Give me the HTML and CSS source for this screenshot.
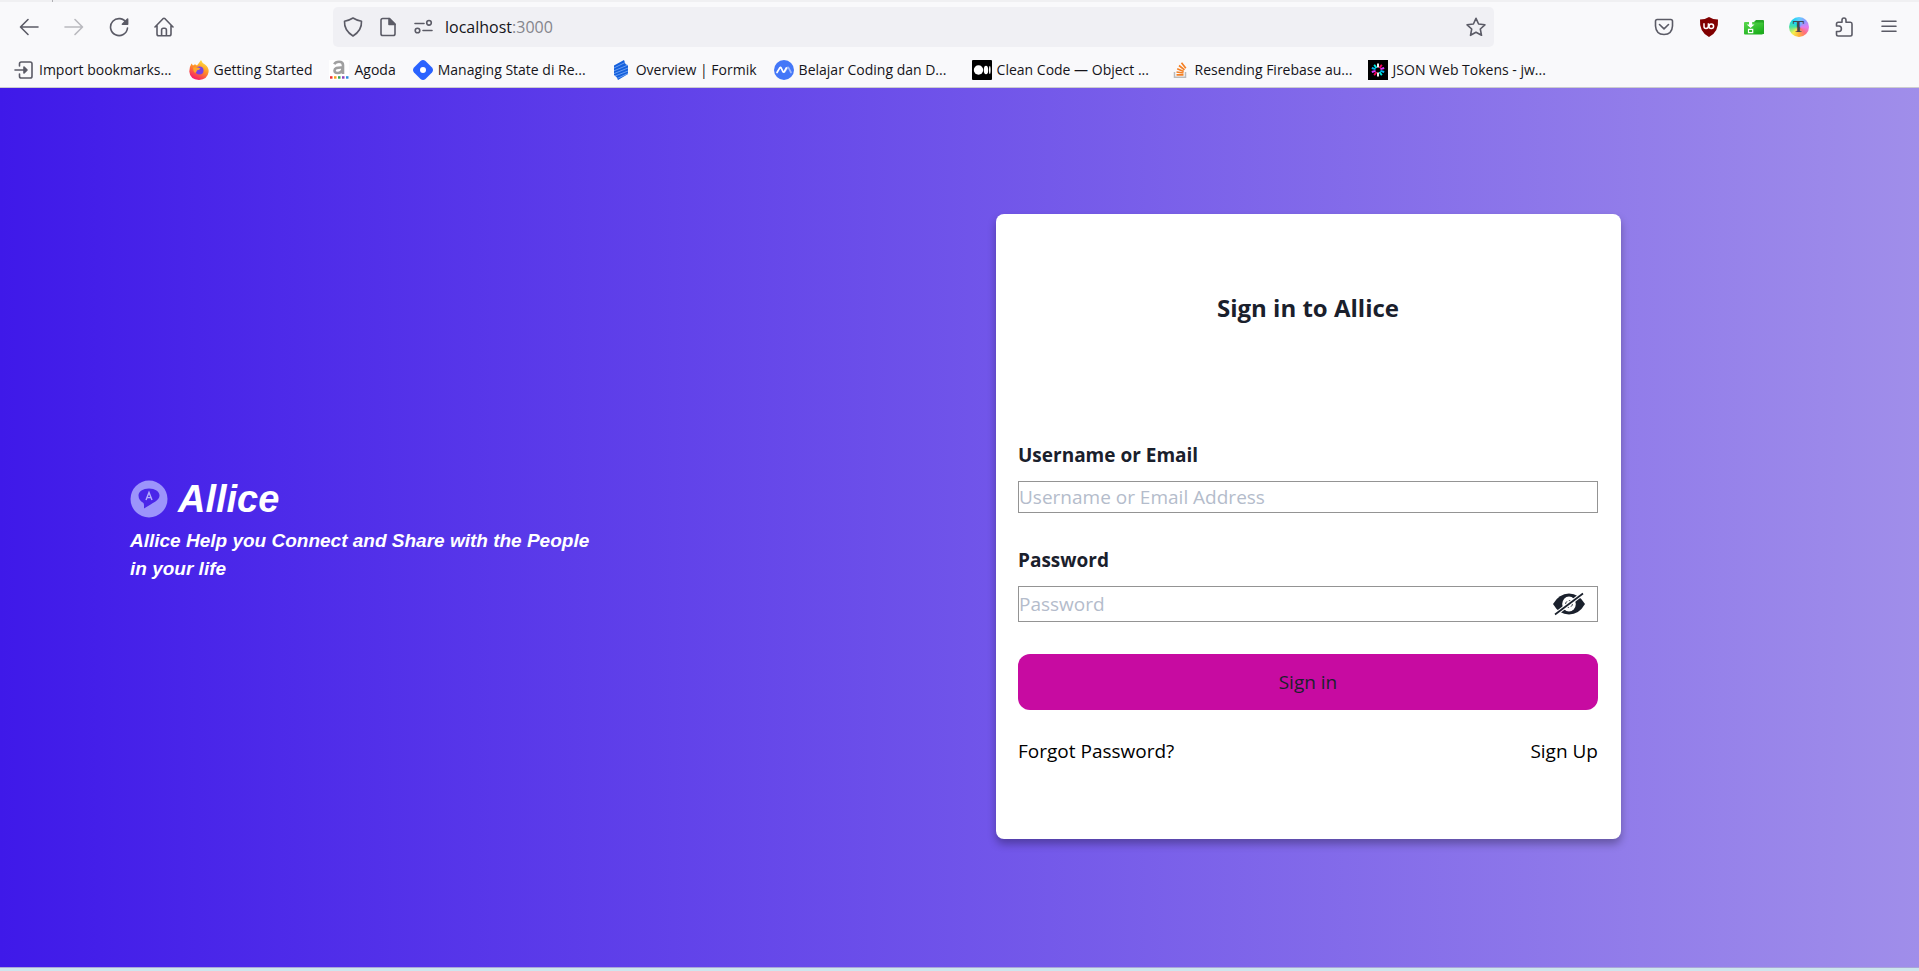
FILE: index.html
```html
<!DOCTYPE html>
<html lang="en">
<head>
<meta charset="utf-8">
<title>Allice</title>
<link rel="stylesheet" href="styles.css">
</head>
<body>
<header class="browser">
  <div class="tabstrip"><span class="tab-divider"></span></div>
  <nav class="toolbar" aria-label="Browser toolbar">
    <button class="tool" aria-label="Back"><svg viewBox="0 0 20 20"><path d="M19 10H2M9 2.500L1.500 10L9 17.500"/></svg></button>
    <button class="tool tool-off" aria-label="Forward"><svg viewBox="0 0 20 20"><path d="M1 10H18M11 2.500L18.500 10L11 17.500"/></svg></button>
    <button class="tool" aria-label="Reload"><svg viewBox="0 0 20 20"><path d="M17.500 6A8.500 8.500 0 1 0 18.500 11"/><path class="solid" d="M18.600 2v5.200h-5.200z"/></svg></button>
    <button class="tool" aria-label="Home"><svg viewBox="0 0 20 20"><path d="M1 10L9 1.700Q10 .9 11 1.700L19 10M3 8.500V17q0 1.800 1.800 1.800H15.200Q17 18.800 17 17V8.500M7.600 18.500V13q0-1.700 1.700-1.700h1.400q1.700 0 1.700 1.700v5.500"/></svg></button>
    <span class="spacer"></span>
    <div class="urlbar">
      <span class="site-icons">
        <svg viewBox="0 0 20 20"><path d="M10 1Q14 3.500 18.500 4.300Q19 13.500 10 19Q1 13.500 1.500 4.300Q6 3.500 10 1z"/></svg>
        <svg viewBox="0 0 20 20"><path d="M4.500 1.500H11.500L17 7V16.700Q17 18.500 15.200 18.500H4.800Q3 18.500 3 16.700V3.300Q3 1.500 4.800 1.500z"/><path class="solid" d="M11 1.500V7.500H17z"/></svg>
        <svg viewBox="0 0 20 20"><path d="M2 6.500H11M10 13.500H19"/><circle cx="16" cy="5.800" r="2.300"/><circle cx="4.500" cy="13.500" r="2.300"/></svg>
      </span>
      <span class="address">localhost<span class="port">:3000</span></span>
      <svg class="star" viewBox="0 0 20 20"><path d="M10 1.300L12.600 7L18.900 7.800L14.300 12L15.500 18.300L10 15.200L4.500 18.300L5.700 12L1.100 7.800L7.400 7z"/></svg>
    </div>
    <span class="spacer"></span>
    <button class="tool" aria-label="Pocket"><svg viewBox="0 0 20 20"><path d="M3.200 2.500H16.800Q18.500 2.500 18.500 4.200V9Q18 17.400 10 17.500Q2 17.400 1.500 9V4.200Q1.500 2.500 3.200 2.500zM5.500 7.500L10 11.800L14.500 7.500"/></svg></button>
    <button class="tool" aria-label="uBlock Origin"><svg class="art" viewBox="0 0 20 20"><path fill="#800000" d="M10 0Q14 2.500 19 2.500Q20 15 10 20Q0 15 1 2.500Q6 2.500 10 0z"/><path fill="none" stroke="#fff" stroke-width="1.500" d="M5 6.300V9.500Q5 11.500 7 11.500Q9.400 11.500 9.400 9V6.300"/><circle cx="12.300" cy="9.200" r="2.300" fill="none" stroke="#fff" stroke-width="1.500"/></svg></button>
    <button class="tool" aria-label="Downloads folder"><svg class="art" viewBox="0 0 20 20"><defs><linearGradient id="folder" x1="0" y1="0" x2=".6" y2="1"><stop offset="0" stop-color="#5bd84e"/><stop offset="1" stop-color="#1cb01c"/></linearGradient></defs><path fill="#27a527" d="M10 5L12 3h7Q20 3 20 4V17H10z"/><path fill="url(#folder)" d="M1 5Q0 5 0 6V16.500Q0 17.500 1 17.500H18.500L19.500 6.500Q19.500 5.500 18.500 5.500H11L10 5z"/><path fill="#fff" d="M5 4.500h3.200v3h2.300L6.600 11L2.700 7.500H5z"/><path fill="none" stroke="#fff" stroke-width="1.200" d="M4.500 12.300h4.200v3.400H4.500z"/></svg></button>
    <button class="tool" aria-label="Text tool"><span class="wheel">T</span></button>
    <button class="tool" aria-label="Extensions"><svg viewBox="0 0 20 20"><path d="M2.500 8.500V7Q2.500 5.300 4.200 5.300H8V3.200Q8 1 10 1Q12 1 12 3.200V5.300H16.500Q18 5.300 18 7V17.300Q18 19 16.300 19H4.200Q2.500 19 2.500 17.300V14.500H5Q7.400 14.300 7.400 11.700Q7.400 9.200 5 9H2.500"/></svg></button>
    <button class="tool" aria-label="Menu"><svg viewBox="0 0 20 20"><path d="M3 4.200H17M3 9.200H17M3 14.200H17"/></svg></button>
  </nav>
  <nav class="bookmarks" aria-label="Bookmarks">
    <a class="bookmark" href="#"><svg class="line" viewBox="0 0 20 20"><path d="M5.500 6V3.800Q5.500 2 7.300 2H16.200Q18 2 18 3.800V16.200Q18 18 16.200 18H7.300Q5.500 18 5.500 16.200V14M1 10H12"/><path class="solid" d="M10 7L13 10L10 13z"/></svg><span>Import bookmarks...</span></a>
    <a class="bookmark" href="#"><svg viewBox="0 0 20 20"><defs><linearGradient id="fox" x1=".8" y1="0" x2=".3" y2="1"><stop offset="0" stop-color="#fff044"/><stop offset=".45" stop-color="#ff9425"/><stop offset="1" stop-color="#f5156c"/></linearGradient></defs><path fill="url(#fox)" d="M12 0Q13 3 16 4.500Q20 7 19.600 12Q18.500 19.500 10 20Q1 19.500 .3 11.500Q.2 7 2.500 3.500L4 5.500L6 4.200L8 5.500Q10 3 12 0z"/><circle cx="10.500" cy="10.500" r="4" fill="#7542e5"/><path fill="#ffa52b" d="M4 7.500Q8 6.500 11.500 8.500Q10 10.500 8 10.300Q8 12 6 13Q4 11 4 7.500z"/></svg><span>Getting Started</span></a>
    <a class="bookmark" href="#"><svg viewBox="0 0 20 20"><rect width="20" height="20" fill="#fff"/><path fill="none" stroke="#a0a0a0" stroke-width="2.600" d="M5.300 4.300Q6.500 1.800 10 1.800Q14 1.800 14 5V14M13.500 7.500Q5.500 7 5.500 10.500Q5.500 13 8.500 13Q13 12.800 13.500 9"/><path fill="#e33" d="M1 16.200h2.500v2.500H1z"/><path fill="#f7a21b" d="M5 16.200h2.500v2.500H5z"/><path fill="#3aa655" d="M9 16.200h2.500v2.500H9z"/><path fill="#9044b8" d="M13 16.200h2.500v2.500H13z"/><path fill="#2e8de0" d="M17 16.200h2.500v2.500H17z"/></svg><span>Agoda</span></a>
    <a class="bookmark bookmark-cut" href="#"><svg viewBox="0 0 20 20"><path fill="#2962ff" d="M7.500 1Q10-1 12.500 1L19 7.500Q21 10 19 12.500L12.500 19Q10 21 7.500 19L1 12.500Q-1 10 1 7.500z"/><circle cx="10" cy="10" r="3" fill="#fff"/></svg><span>Managing State di Re...</span></a>
    <a class="bookmark" href="#"><svg viewBox="0 0 20 20"><path fill="#1460dc" d="M3 5.500L13 0L14.500 4L17 5.500V14L7 20L5.500 17L3 15z"/><path fill="none" stroke="#8db7fa" stroke-width=".7" d="M3 8L14 2.500M3 10.800L17 5M3 13.600L17 8M4 16L17 11M6 18.500L17 13.500"/></svg><span>Overview | Formik</span></a>
    <a class="bookmark bookmark-cut" href="#"><svg viewBox="0 0 20 20"><circle cx="10" cy="10" r="10" fill="#4477f8"/><g fill="none" stroke-width="1.700" stroke-linecap="round"><path stroke="#9db8fc" d="M10.500 12L13.500 7.500Q14 7 14.500 7.700L17 12.500"/><path stroke="#fff" d="M3 12.500L6 7.500Q6.500 7 7 7.700L9 11.800Q9.600 12.700 10.200 11.800L12.300 8"/></g></svg><span>Belajar Coding dan D...</span></a>
    <a class="bookmark bookmark-cut" href="#"><svg viewBox="0 0 20 20"><rect width="20" height="20" rx="1"/><circle cx="6.500" cy="10" r="4.700" fill="#fff"/><ellipse cx="14" cy="10" rx="2.200" ry="4.300" fill="#fff"/><ellipse cx="17.800" cy="10" rx=".8" ry="4" fill="#fff"/></svg><span>Clean Code — Object ...</span></a>
    <a class="bookmark bookmark-cut" href="#"><svg viewBox="0 0 20 20"><path fill="none" stroke="#bcbbbb" stroke-width="1.500" d="M4.500 12V17.300H15.500V12"/><path fill="none" stroke="#f48024" stroke-width="1.700" d="M6.500 14.800H13.500M6.500 12L13.500 13M7.200 8.800L13.700 11.500M9 5.500L14.500 9.800M11.500 2.800L15.800 8.300"/></svg><span>Resending Firebase au...</span></a>
    <a class="bookmark bookmark-cut" href="#"><svg viewBox="0 0 20 20"><rect width="20" height="20"/><g stroke-width="1.900"><path stroke="#fff" d="M10 3.500V7.500M10 12.500V16.500"/><path stroke="#00f2e6" d="M6.200 4.800L8.500 8M11.500 12L13.800 15.200"/><path stroke="#00b9f1" d="M3.800 8L7.600 9.200M12.400 10.800L16.200 12"/><path stroke="#d63aff" d="M3.800 12L7.600 10.800M12.400 9.200L16.200 8"/><path stroke="#fb015b" d="M6.200 15.200L8.500 12M11.500 8L13.800 4.800"/></g></svg><span>JSON Web Tokens - jw...</span></a>
  </nav>
</header>

<main class="page">
  <section class="brand">
    <div class="brand-row">
      <svg class="logo" viewBox="0 0 38 38"><circle cx="19" cy="19" r="18.500" fill="#9c94fb"/><path fill="#4a26e9" d="M19 8.500C25 8.500 29.500 11.500 29.500 15.500C29.500 20.500 23 22.500 14 28.500Q14.500 25 13.500 23Q8.500 20 8.500 15.500C8.500 11.500 13 8.500 19 8.500z"/><path fill="none" stroke="#b4aefc" stroke-width="1.400" d="M16 20L19 12.500L22 20M17 17.600H21"/></svg>
      <h1 class="brand-name">Allice</h1>
    </div>
    <p class="tagline">Allice Help you Connect and Share with the People in your life</p>
  </section>

  <form class="card">
    <h2 class="card-title">Sign in to Allice</h2>
    <div class="field">
      <label for="user">Username or Email</label>
      <input class="box" id="user" type="text" placeholder="Username or Email Address">
    </div>
    <div class="field">
      <label for="pass">Password</label>
      <div class="box box-pass">
        <input id="pass" type="password" placeholder="Password">
        <button class="reveal" type="button" aria-label="Show password"><svg viewBox="0 0 32 24"><path fill="#1a202c" d="M0 12Q6 1.500 16 1.500Q26 1.500 32 12Q26 22.500 16 22.500Q6 22.500 0 12z"/><ellipse cx="16" cy="12" rx="6.800" ry="7.500" fill="#fff"/><circle cx="16" cy="12" r="3.300" fill="none" stroke="#1a202c" stroke-width="1" stroke-dasharray="3 2"/><path fill="none" stroke="#fff" stroke-width="4" d="M2 22.500L30 1.500"/><path fill="none" stroke="#1a202c" stroke-width="1.700" d="M2 22.500L30 1.500"/></svg></button>
      </div>
    </div>
    <button class="submit" type="submit">Sign in</button>
    <div class="links"><a href="#">Forgot Password?</a><a href="#">Sign Up</a></div>
  </form>
</main>
<footer class="edge"></footer>
</body>
</html>
```
FILE: styles.css
```css
* { box-sizing: border-box; }
body {
  margin: 0;
  min-height: 100vh;
  display: flex;
  flex-direction: column;
  font-family: "Open Sans", "Noto Sans", sans-serif;
  color: #1a202c;
}
h1, h2, p { margin: 0; }
button, input { font: inherit; color: inherit; }
a { color: inherit; text-decoration: none; }

/* Browser bar */
.browser { background: #f9f9fb; border-bottom: 1px solid #cccccf; }
.tabstrip { height: 2px; background: #f0f0f2; padding-left: 52px; }
.tab-divider { display: block; width: 1px; height: 2px; background: #b0b0b4; }
.toolbar { display: flex; align-items: center; height: 50px; padding: 0 8px 0 6px; }
.tool {
  display: flex;
  align-items: center;
  justify-content: center;
  width: 45px;
  height: 40px;
  padding: 0;
  border: 0;
  background: none;
}
.tool svg, .urlbar svg, .bookmark svg { width: 20px; height: 20px; flex: none; }
.tool svg:not(.art), .urlbar svg, .bookmark .line {
  fill: none;
  stroke: #5b5b66;
  stroke-width: 1.6;
  stroke-linejoin: round;
  stroke-linecap: round;
}
.solid { fill: #5b5b66; }
.tool-off { opacity: 0.4; }
.spacer { flex: 0 1 147px; }
.urlbar {
  flex: 1;
  display: flex;
  align-items: center;
  gap: 12px;
  height: 40px;
  padding: 0 8px 0 10px;
  border-radius: 5px;
  background: #f0f0f4;
}
.site-icons { display: flex; gap: 15px; }
.address { font-size: 16px; line-height: 24px; color: #15141a; margin-right: auto; }
.port { color: #85858c; }
.wheel {
  width: 20px;
  height: 20px;
  border-radius: 50%;
  background: conic-gradient(#5fd0ff, #8f9cff, #e27cf0, #ff6f7c, #ffb13a, #f3f04d, #4ee0a0, #19d4f0, #5fd0ff);
  font: bold 17px/20px "Liberation Serif", serif;
  color: #45454f;
}
.bookmarks { display: flex; align-items: center; gap: 17px; height: 35px; padding: 0 13px 0 14px; }
.bookmark { display: flex; align-items: center; gap: 5px; font-size: 14px; line-height: 20px; color: #15141a; white-space: nowrap; }
.bookmark-cut span { width: 156px; }

/* Sign-in page */
.page {
  flex: 1;
  display: flex;
  align-items: center;
  justify-content: space-between;
  padding: 0 298px 2px 130px;
  background: linear-gradient(90deg, #3f19e9, #a08eea);
}
.brand { width: 470px; color: #fff; font: italic bold 19px/28px "Liberation Sans", Arial, sans-serif; }
.brand-row { display: flex; align-items: center; gap: 10px; }
.logo { width: 38px; height: 38px; }
.brand-name { font-size: 38px; line-height: 56px; }
.card {
  width: 625px;
  min-height: 625px;
  padding: 76px 23px 64px 22px;
  border-radius: 8px;
  background: #fff;
  box-shadow: 0 5px 8px rgba(0, 0, 0, 0.3);
  font-size: 19px;
  line-height: 30px;
}
.card-title { font-size: 24px; line-height: 36px; text-align: center; margin-bottom: 114px; }
.field { display: flex; flex-direction: column; gap: 11px; margin-bottom: 32px; }
.field label { font-weight: 700; }
.box { display: flex; width: 100%; height: 32px; padding: 0; border: 1px solid #949494; background: #fff; outline: 0; }
.box-pass { height: 36px; padding-right: 12px; align-items: center; }
.box-pass input { flex: 1; min-width: 0; padding: 0; border: 0; outline: 0; }
.box::placeholder, .box-pass input::placeholder { color: #b4bccb; opacity: 1; }
.reveal { display: flex; padding: 0; border: 0; background: none; }
.reveal svg { width: 32px; height: 24px; }
.submit { display: block; width: 100%; height: 56px; border: 0; border-radius: 12px; background: #c70ba1; }
.links { display: flex; justify-content: space-between; margin-top: 26px; color: #000; }

.edge { height: 4px; background: #cde6ee; border-top: 1px solid #a9a6d8; }
```
